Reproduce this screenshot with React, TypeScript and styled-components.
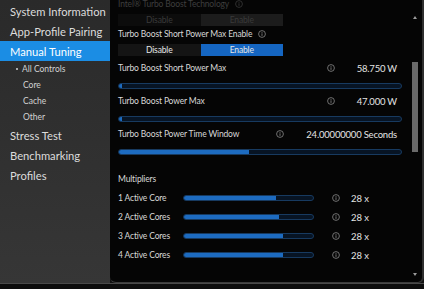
import styled, { createGlobalStyle } from "styled-components";

const Global = createGlobalStyle`
  html, body { margin: 0; padding: 0; background: #101010; }
  body { font-family: Lato, "Open Sans", sans-serif; }
`;

const Shell = styled.div`
  width: 424px;
  height: 289px;
  display: flex;
  flex-direction: column;
  background: #101010;
  overflow: hidden;
`;

const Body = styled.div`
  display: flex;
  height: 283px;
`;

const Footer = styled.div`
  flex: 1;
  border-top: 1px solid #4a4a4a;
  background: #0d0d0d;
`;

const Sidebar = styled.nav`
  width: 110px;
  flex-shrink: 0;
  background: linear-gradient(#2a2a2a, #363636);
  display: flex;
  flex-direction: column;
  padding-top: 1px;
`;

const NavItem = styled.div<{ $active?: boolean }>`
  height: 20px;
  display: flex;
  align-items: center;
  padding-left: 10px;
  font-size: 11.2px;
  color: ${p => (p.$active ? "#ffffff" : "#dcdcdc")};
  background: ${p => (p.$active ? "#1b8de4" : "transparent")};
  white-space: nowrap;
`;

const SubItem = styled.div<{ $bullet?: boolean }>`
  height: 16px;
  display: flex;
  align-items: center;
  padding-left: ${p => (p.$bullet ? "16px" : "23px")};
  font-size: 8.5px;
  color: #d2d2d2;
  gap: 4px;
`;

const Dot = styled.span`
  width: 2px;
  height: 2px;
  border-radius: 50%;
  background: #d2d2d2;
`;

const Panel = styled.main`
  flex: 1;
  display: flex;
  background: #050505;
  border-right: 2px solid #2e2e2e;
  border-bottom: 1px solid #3c3c3c;
  border-radius: 0 0 6px 6px;
  overflow: hidden;
`;

const Content = styled.div`
  flex: 1;
  padding-left: 8px;
  margin-top: -2px;
  display: flex;
  flex-direction: column;
  font-size: 8.5px;
  letter-spacing: -0.15px;
`;

const Title = styled.div<{ $dim?: boolean }>`
  height: 12px;
  display: flex;
  align-items: center;
  gap: 6px;
  color: ${p => (p.$dim ? "#3e3e3e" : "#d8d8d8")};
  white-space: nowrap;
`;

const Toggle = styled.div`
  display: flex;
  width: 165px;
  height: 12px;
  margin: 4px 0 2px;
`;

const ToggleBtn = styled.div<{ $on?: boolean; $dim?: boolean }>`
  flex: 1;
  display: flex;
  align-items: center;
  justify-content: center;
  color: ${p => (p.$dim ? "#3a3a3a" : "#e6e6e6")};
  background: ${p => (p.$dim ? (p.$on ? "#1c1c1c" : "#0c0c0c") : p.$on ? "#1566c2" : "#141414")};
`;

const ValueRow = styled.div`
  height: 12px;
  margin-top: 4px;
  display: flex;
  align-items: center;
  color: #d8d8d8;
  white-space: nowrap;
`;

const Label = styled.span`
  flex: 1;
`;

const Value = styled.span`
  font-size: 9.5px;
  letter-spacing: -0.2px;
  color: #e4e4e4;
  margin-left: 22px;
  margin-right: 11px;
`;

const Track = styled.div<{ $w?: number }>`
  width: ${p => (p.$w ? `${p.$w}px` : "282px")};
  height: 4px;
  border: 1px solid #173a60;
  border-radius: 3px;
  background: #071424;
  overflow: hidden;
`;

const Fill = styled.div`
  height: 100%;
  background: #1d6bc0;
`;

const BigTrack = styled(Track)`
  margin: 9px 0 2px;
`;

const Section = styled.div`
  color: #d8d8d8;
  margin-top: 16px;
  height: 12px;
  display: flex;
  align-items: center;
`;

const MultRow = styled.div`
  display: flex;
  align-items: center;
  height: 12px;
  margin-top: 7px;
  color: #d8d8d8;
  white-space: nowrap;
`;

const MultLabel = styled.span`
  width: 65px;
`;

const MultValue = styled.span`
  font-size: 9.5px;
  letter-spacing: -0.1px;
  color: #e4e4e4;
  margin-left: 11px;
`;

const InfoWrap = styled.span`
  display: inline-flex;
  margin-left: 18px;
`;

const ScrollCol = styled.div`
  width: 14px;
  display: flex;
  flex-direction: column;
  align-items: center;
  padding: 16px 0 6px;
`;

const Thumb = styled.div`
  width: 6px;
  height: 90px;
  margin-top: 43px;
  background: #6a6a6a;
`;

const Spacer = styled.div`
  flex: 1;
`;

const Arrow = styled.div<{ $down?: boolean }>`
  width: 0;
  height: 0;
  border-left: 2.5px solid transparent;
  border-right: 2.5px solid transparent;
  ${p => (p.$down ? "border-top: 3px solid #9a9a9a;" : "border-bottom: 3px solid #9a9a9a;")}
`;

const Info = ({ dim }: { dim?: boolean }) => (
  <svg width="8" height="8" viewBox="0 0 8 8">
    <circle cx="4" cy="4" r="3.4" fill="none" stroke={dim ? "#3a3a3a" : "#8a8a8a"} strokeWidth="0.8" />
    <rect x="3.6" y="3.3" width="0.8" height="2.6" fill={dim ? "#3a3a3a" : "#8a8a8a"} />
    <rect x="3.6" y="2" width="0.8" height="0.8" fill={dim ? "#3a3a3a" : "#8a8a8a"} />
  </svg>
);

const sliders = [
  { label: "Turbo Boost Short Power Max", value: "58.750 W", pct: 1 },
  { label: "Turbo Boost Power Max", value: "47.000 W", pct: 1 },
  { label: "Turbo Boost Power Time Window", value: "24.00000000 Seconds", pct: 46 },
];

const mults = [
  { label: "1 Active Core", pct: 71 },
  { label: "2 Active Cores", pct: 74 },
  { label: "3 Active Cores", pct: 77 },
  { label: "4 Active Cores", pct: 77 },
];

export default function App() {
  return (
    <Shell>
      <Global />
      <Body>
        <Sidebar>
          <NavItem>System Information</NavItem>
          <NavItem>App-Profile Pairing</NavItem>
          <NavItem $active>Manual Tuning</NavItem>
          <SubItem $bullet><Dot />All Controls</SubItem>
          <SubItem>Core</SubItem>
          <SubItem>Cache</SubItem>
          <SubItem>Other</SubItem>
          <NavItem>Stress Test</NavItem>
          <NavItem>Benchmarking</NavItem>
          <NavItem>Profiles</NavItem>
        </Sidebar>
        <Panel>
          <Content>
            <Title $dim>Intel® Turbo Boost Technology <Info dim /></Title>
            <Toggle>
              <ToggleBtn $dim>Disable</ToggleBtn>
              <ToggleBtn $dim $on>Enable</ToggleBtn>
            </Toggle>
            <Title>Turbo Boost Short Power Max Enable <Info /></Title>
            <Toggle>
              <ToggleBtn>Disable</ToggleBtn>
              <ToggleBtn $on>Enable</ToggleBtn>
            </Toggle>
            {sliders.map(s => (
              <div key={s.label}>
                <ValueRow>
                  <Label>{s.label}</Label>
                  <Info />
                  <Value>{s.value}</Value>
                </ValueRow>
                <BigTrack>
                  <Fill style={{ width: `${s.pct}%` }} />
                </BigTrack>
              </div>
            ))}
            <Section>Multipliers</Section>
            {mults.map(m => (
              <MultRow key={m.label}>
                <MultLabel>{m.label}</MultLabel>
                <Track $w={129}>
                  <Fill style={{ width: `${m.pct}%` }} />
                </Track>
                <InfoWrap><Info /></InfoWrap>
                <MultValue>28 x</MultValue>
              </MultRow>
            ))}
          </Content>
          <ScrollCol>
            <Arrow />
            <Thumb />
            <Spacer />
            <Arrow $down />
          </ScrollCol>
        </Panel>
      </Body>
      <Footer />
    </Shell>
  );
}
